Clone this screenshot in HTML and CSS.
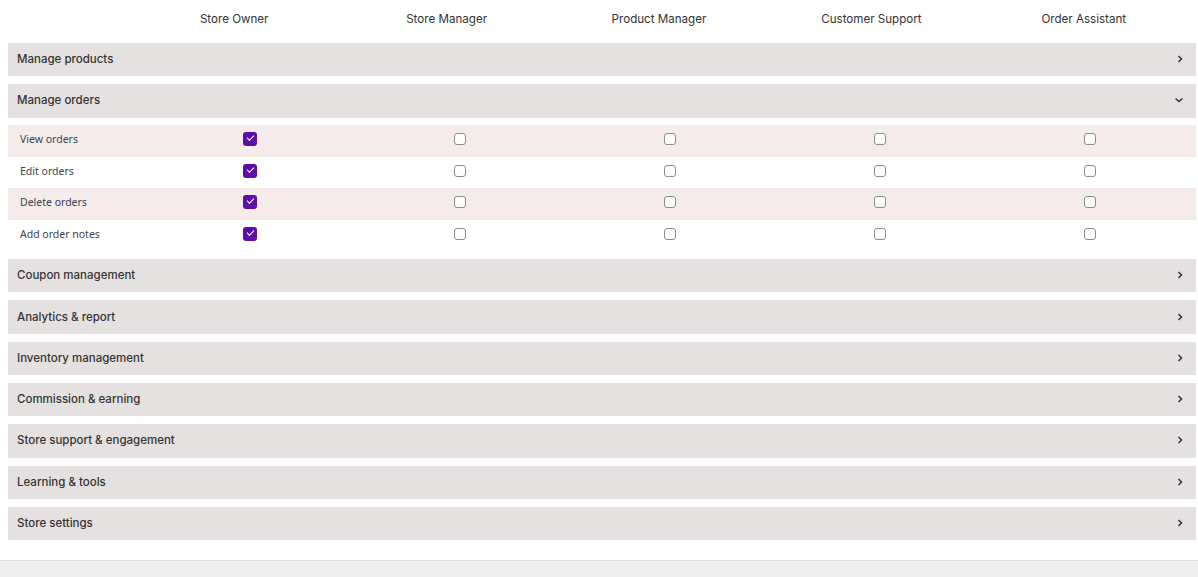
FILE: index.html
```html
<!DOCTYPE html>
<html>
<head>
<meta charset="utf-8">
<link rel="stylesheet" href="styles.css">
</head>
<body>
<div class="page">
  <div class="head">
    <div></div>
    <div class="role">Store Owner</div>
    <div class="role">Store Manager</div>
    <div class="role">Product Manager</div>
    <div class="role">Customer Support</div>
    <div class="role">Order Assistant</div>
  </div>

  <div class="group"><span>Manage products</span><svg class="chev" width="8" height="8" viewBox="0 0 8 8"><path d="M2.5 1 L5.5 4 L2.5 7" fill="none" stroke="#333" stroke-width="1.5"/></svg></div>
  <div class="group open"><span>Manage orders</span><svg class="chev" width="10" height="8" viewBox="0 0 10 8"><path d="M1.5 2.5 L5 5.5 L8.5 2.5" fill="none" stroke="#333" stroke-width="1.5"/></svg></div>

  <div class="subs">
    <div class="sub alt"><span class="lbl">View orders</span><span class="cell"><span class="cb on"></span></span><span class="cell"><span class="cb"></span></span><span class="cell"><span class="cb"></span></span><span class="cell"><span class="cb"></span></span><span class="cell"><span class="cb"></span></span></div>
    <div class="sub"><span class="lbl">Edit orders</span><span class="cell"><span class="cb on"></span></span><span class="cell"><span class="cb"></span></span><span class="cell"><span class="cb"></span></span><span class="cell"><span class="cb"></span></span><span class="cell"><span class="cb"></span></span></div>
    <div class="sub alt"><span class="lbl">Delete orders</span><span class="cell"><span class="cb on"></span></span><span class="cell"><span class="cb"></span></span><span class="cell"><span class="cb"></span></span><span class="cell"><span class="cb"></span></span><span class="cell"><span class="cb"></span></span></div>
    <div class="sub"><span class="lbl">Add order notes</span><span class="cell"><span class="cb on"></span></span><span class="cell"><span class="cb"></span></span><span class="cell"><span class="cb"></span></span><span class="cell"><span class="cb"></span></span><span class="cell"><span class="cb"></span></span></div>
  </div>

  <div class="group"><span>Coupon management</span><svg class="chev" width="8" height="8" viewBox="0 0 8 8"><path d="M2.5 1 L5.5 4 L2.5 7" fill="none" stroke="#333" stroke-width="1.5"/></svg></div>
  <div class="group"><span>Analytics &amp; report</span><svg class="chev" width="8" height="8" viewBox="0 0 8 8"><path d="M2.5 1 L5.5 4 L2.5 7" fill="none" stroke="#333" stroke-width="1.5"/></svg></div>
  <div class="group"><span>Inventory management</span><svg class="chev" width="8" height="8" viewBox="0 0 8 8"><path d="M2.5 1 L5.5 4 L2.5 7" fill="none" stroke="#333" stroke-width="1.5"/></svg></div>
  <div class="group"><span>Commission &amp; earning</span><svg class="chev" width="8" height="8" viewBox="0 0 8 8"><path d="M2.5 1 L5.5 4 L2.5 7" fill="none" stroke="#333" stroke-width="1.5"/></svg></div>
  <div class="group"><span>Store support &amp; engagement</span><svg class="chev" width="8" height="8" viewBox="0 0 8 8"><path d="M2.5 1 L5.5 4 L2.5 7" fill="none" stroke="#333" stroke-width="1.5"/></svg></div>
  <div class="group"><span>Learning &amp; tools</span><svg class="chev" width="8" height="8" viewBox="0 0 8 8"><path d="M2.5 1 L5.5 4 L2.5 7" fill="none" stroke="#333" stroke-width="1.5"/></svg></div>
  <div class="group"><span>Store settings</span><svg class="chev" width="8" height="8" viewBox="0 0 8 8"><path d="M2.5 1 L5.5 4 L2.5 7" fill="none" stroke="#333" stroke-width="1.5"/></svg></div>
</div>
<div class="footer"></div>
</body>
</html>
```

FILE: styles.css
```css
html, body {
  margin: 0;
  padding: 0;
  background: #fff;
}
body {
  font-family: Inter, "Liberation Sans", sans-serif;
  color: #333;
  height: 577px;
  overflow: hidden;
}
.page {
  padding: 2px 2px 0 8px;
  display: flex;
  flex-direction: column;
  gap: 8px;
}
.head {
  display: grid;
  grid-template-columns: 120px repeat(5, 1fr);
  height: 33px;
  align-items: center;
  padding-right: 6px;
}
.role {
  text-align: center;
  font-size: 11.6px;
  color: #333;
}
.group {
  height: 33.3px;
  box-sizing: border-box;
  background: #e6e1e1;
  display: flex;
  align-items: center;
  justify-content: space-between;
  padding: 0 12px 1px 9px;
  font-size: 11.5px;
  font-weight: 500;
  color: #333;
}
.chev {
  display: block;
}
.subs {
  display: flex;
  flex-direction: column;
  margin-top: -0.5px;
}
.sub {
  height: 31.5px;
  box-sizing: border-box;
  padding-bottom: 3px;
  display: grid;
  grid-template-columns: 137px repeat(5, 210px);
  align-items: center;
}
.sub.alt {
  background: #f4ebea;
}
.lbl {
  padding-left: 12px;
  font-family: "Noto Sans", sans-serif;
  font-size: 10.5px;
  color: #3c434a;
}
.cell {
  display: flex;
  justify-content: center;
}
.cb {
  width: 10px;
  height: 10px;
  border: 1.5px solid #8c8c8c;
  border-radius: 3px;
  background: #fff;
  display: block;
}
.cb.on {
  width: 14px;
  height: 14px;
  border: none;
  background: #5b0fa8;
  position: relative;
}
.cb.on::after {
  content: "";
  position: absolute;
  left: 3.5px;
  top: 3px;
  width: 6px;
  height: 3px;
  border-left: 1.6px solid #fff;
  border-bottom: 1.6px solid #fff;
  transform: rotate(-45deg);
}
.footer {
  margin-top: 20px;
  border-top: 1px solid #dcdcdc;
  background: #efefef;
  height: 40px;
}
```
